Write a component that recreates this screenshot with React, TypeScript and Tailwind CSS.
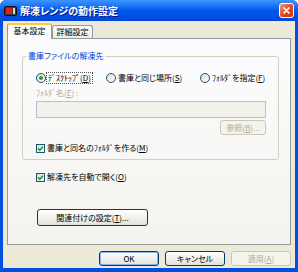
import type { ReactNode } from "react";

const jp = "font-['Noto_Sans_CJK_JP','Noto_Sans_CJK_SC',sans-serif] [font-feature-settings:'palt']";

function Key({ k }: { k: string }) {
  return (
    <>
      (<u className="underline-offset-1">{k}</u>)
    </>
  );
}

function Radio({ checked }: { checked?: boolean }) {
  return (
    <span className="flex h-[10px] w-[10px] shrink-0 items-center justify-center rounded-full border border-[#1C5180] bg-linear-to-br from-[#DCDCD7] to-white">
      {checked && <span className="h-[4px] w-[4px] rounded-full bg-[#21A121]" />}
    </span>
  );
}

function Check() {
  return (
    <span className="flex h-[9px] w-[9px] shrink-0 items-center justify-center border border-[#1C5180] bg-linear-to-br from-[#DCDCD7] to-white">
      <svg width="7" height="7" viewBox="0 0 7 7">
        <path d="M1 3.3 L2.8 5.2 L6 1.6" stroke="#21A121" strokeWidth="1.6" fill="none" />
      </svg>
    </span>
  );
}

function Btn({
  children,
  className = "",
  disabled,
  def,
}: {
  children: ReactNode;
  className?: string;
  disabled?: boolean;
  def?: boolean;
}) {
  const look = disabled
    ? "border-[#C9C7BA] bg-[#F5F4EA] text-[#ACA899]"
    : def
      ? "border-[#003C74] bg-linear-to-b from-white to-[#E3E2DA] text-black shadow-[inset_0_0_0_1px_#8CB4F2]"
      : "border-[#003C74] bg-linear-to-b from-white to-[#E3E2DA] text-black";
  return (
    <div
      className={`flex items-center justify-center rounded-[3px] border text-[8px] leading-[10px] ${look} ${className}`}
    >
      {children}
    </div>
  );
}

function AppIcon() {
  return (
    <svg width="13" height="10" viewBox="0 0 13 10">
      <rect x="0.5" y="0.5" width="12" height="9" rx="1" fill="#3A3A3A" stroke="#111" />
      <rect x="2" y="2" width="6" height="6" fill="#E02318" />
      <rect x="9" y="2" width="2" height="6" fill="#D8D8D8" />
    </svg>
  );
}

export default function App() {
  return (
    <div className={`flex h-[272px] w-[298px] flex-col overflow-hidden rounded-t-[6px] bg-[#0050E0] ${jp}`}>
      {/* title bar */}
      <div className="flex h-[21px] shrink-0 items-center bg-linear-to-b from-[#3D95FF] via-[#0058EE] to-[#0046D8] pl-[4px] pr-[4px]">
        <AppIcon />
        <span className="ml-[3px] text-[10px] font-bold leading-[12px] text-white [text-shadow:1px_1px_0_#0A1883]">
          解凍レンジの動作設定
        </span>
        <div className="flex-1" />
        <div className="flex h-[15px] w-[15px] items-center justify-center rounded-[3px] border border-white bg-linear-to-br from-[#F29B7C] via-[#E0481C] to-[#C83A12]">
          <svg width="9" height="9" viewBox="0 0 9 9">
            <path d="M1.5 1.5 L7.5 7.5 M7.5 1.5 L1.5 7.5" stroke="white" strokeWidth="1.7" />
          </svg>
        </div>
      </div>

      {/* client */}
      <div className="mx-[3px] mb-[4px] flex flex-1 flex-col bg-[#ECE9D8] px-[4px] pt-[2px] text-black">
        {/* tabs */}
        <div className="flex h-[15px] items-end">
          <div className="relative z-10 -mb-px h-[16px] w-[45px] rounded-t-[3px] border-x border-t-[2px] border-x-[#919B9C] border-t-[#FFC83C] bg-[#FCFCFE] text-center text-[8px] leading-[12px]">
            基本設定
          </div>
          <div className="h-[13px] w-[41px] rounded-t-[3px] border border-b-0 border-[#919B9C] bg-linear-to-b from-white to-[#ECEBE6] text-center text-[8px] leading-[12px]">
            詳細設定
          </div>
        </div>

        {/* panel */}
        <div className="flex h-[207px] flex-col border border-[#919B9C] bg-linear-to-b from-[#FCFCFE] to-[#F4F3EE] px-[14px] pt-[12px]">
          <fieldset className="h-[109px] w-[257px] rounded-[3px] border border-[#D0D0BF]">
            <legend className="ml-[3px] px-[2px] text-[8px] leading-[10px] text-[#0046D5]">
              書庫ファイルの解凍先
            </legend>
            <div className="flex flex-col pl-[13px]">
              <div className="mt-[11px] flex h-[12px] items-center text-[8px] leading-[10px]">
                <div className="flex w-[70px] items-center gap-[1px]">
                  <Radio checked />
                  <span className="outline-1 outline-dotted outline-[#555] px-[1px]">
                    ﾃﾞｽｸﾄｯﾌﾟ<Key k="D" />
                  </span>
                </div>
                <div className="flex w-[94px] items-center gap-[1px]">
                  <Radio />
                  <span className="px-[1px]">
                    書庫と同じ場所<Key k="S" />
                  </span>
                </div>
                <div className="flex items-center gap-[1px]">
                  <Radio />
                  <span className="px-[1px]">
                    ﾌｫﾙﾀﾞを指定<Key k="F" />
                  </span>
                </div>
              </div>
              <div className="mt-[4px] h-[10px] text-[8px] leading-[10px] text-[#ACA899]">
                ﾌｫﾙﾀﾞ名<Key k="E" /> :
              </div>
              <div className="mt-[3px] h-[17px] w-[230px] border border-[#AFC2DA] bg-[#F2F1EC]" />
              <Btn disabled className="ml-[184px] mt-[2px] h-[15px] w-[46px]">
                参照<Key k="B" />...
              </Btn>
              <div className="mt-[8px] flex h-[10px] items-center gap-[2px] text-[8px] leading-[10px]">
                <Check />
                <span>
                  書庫と同名のﾌｫﾙﾀﾞを作る<Key k="M" />
                </span>
              </div>
            </div>
          </fieldset>

          <div className="ml-[14px] mt-[12px] flex h-[10px] items-center gap-[2px] text-[8px] leading-[10px]">
            <Check />
            <span>
              解凍先を自動で開く<Key k="O" />
            </span>
          </div>

          <Btn className="ml-[15px] mt-[27px] h-[17px] w-[111px]">
            関連付けの設定<Key k="T" />...
          </Btn>
        </div>

        {/* dialog buttons */}
        <div className="mt-[6px] flex h-[15px] justify-end gap-[6px]">
          <Btn def className="w-[60px]">
            OK
          </Btn>
          <Btn className="w-[60px]">キャンセル</Btn>
          <Btn disabled className="w-[60px]">
            適用<Key k="A" />
          </Btn>
        </div>
      </div>
    </div>
  );
}
